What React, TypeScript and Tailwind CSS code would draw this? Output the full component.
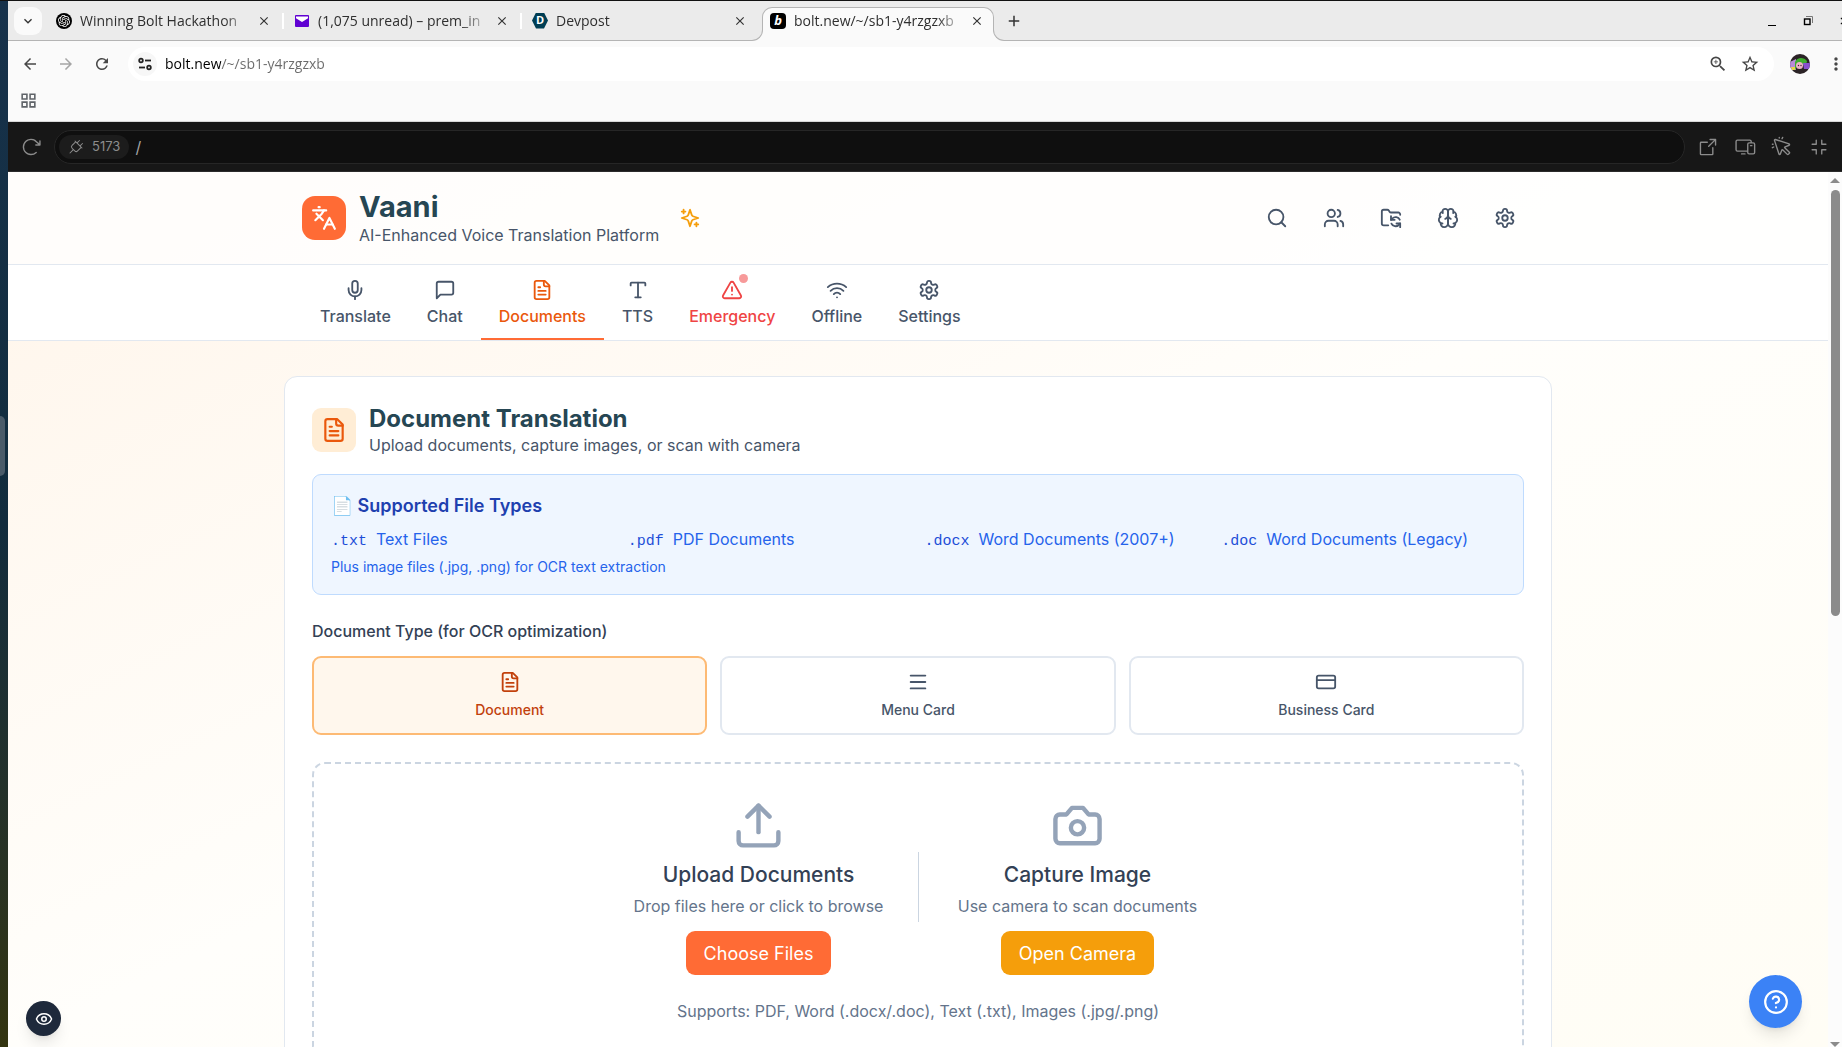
import { useState } from 'react'
import type { ComponentType, ReactNode } from 'react'
import { AlertTriangle, CreditCard, Eye, FolderSync, HelpCircle, Languages, Menu, Mic, Search, Type, Upload, Users, Wifi } from 'lucide-react'
import {
  MdAdd,
  MdArrowBack,
  MdArrowForward,
  MdClose,
  MdExpandMore,
  MdMoreVert,
  MdOutlineGridView,
  MdOutlineZoomIn,
  MdRefresh,
  MdStarBorder,
} from 'react-icons/md'
import { PiArrowClockwise, PiArrowSquareOut, PiCornersIn, PiCursorClick, PiDevices, PiPlug } from 'react-icons/pi'
import { SiOpenai } from 'react-icons/si'

type IconType = ComponentType<{ className?: string }>

function strokeIcon(children: ReactNode): IconType {
  return function StrokeIcon({ className }) {
    return (
      <svg
        viewBox="0 0 24 24"
        fill="none"
        stroke="currentColor"
        strokeWidth="2"
        strokeLinecap="round"
        strokeLinejoin="round"
        className={className}
      >
        {children}
      </svg>
    )
  }
}

const SparklesIcon = strokeIcon(
  <>
    <path d="m12 3-1.912 5.813a2 2 0 0 1-1.275 1.275L3 12l5.813 1.912a2 2 0 0 1 1.275 1.275L12 21l1.912-5.813a2 2 0 0 1 1.275-1.275L21 12l-5.813-1.912a2 2 0 0 1-1.275-1.275L12 3Z" />
    <path d="M5 3v4M19 17v4M3 5h4M17 19h4" />
  </>,
)

const GearIcon = strokeIcon(
  <>
    <path d="M12.22 2h-.44a2 2 0 0 0-2 2v.18a2 2 0 0 1-1 1.73l-.43.25a2 2 0 0 1-2 0l-.15-.08a2 2 0 0 0-2.73.73l-.22.38a2 2 0 0 0 .73 2.73l.15.1a2 2 0 0 1 1 1.72v.51a2 2 0 0 1-1 1.74l-.15.09a2 2 0 0 0-.73 2.73l.22.38a2 2 0 0 0 2.73.73l.15-.08a2 2 0 0 1 2 0l.43.25a2 2 0 0 1 1 1.73V20a2 2 0 0 0 2 2h.44a2 2 0 0 0 2-2v-.18a2 2 0 0 1 1-1.73l.43-.25a2 2 0 0 1 2 0l.15.08a2 2 0 0 0 2.73-.73l.22-.39a2 2 0 0 0-.73-2.73l-.15-.08a2 2 0 0 1-1-1.74v-.5a2 2 0 0 1 1-1.74l.15-.09a2 2 0 0 0 .73-2.73l-.22-.38a2 2 0 0 0-2.73-.73l-.15.08a2 2 0 0 1-2 0l-.43-.25a2 2 0 0 1-1-1.73V4a2 2 0 0 0-2-2z" />
    <circle cx="12" cy="12" r="3" />
  </>,
)

const BrainIcon = strokeIcon(
  <>
    <path d="M12 5a3 3 0 1 0-5.997.125 4 4 0 0 0-2.526 5.77 4 4 0 0 0 .556 6.588A4 4 0 1 0 12 18Z" />
    <path d="M12 5a3 3 0 1 1 5.997.125 4 4 0 0 1 2.526 5.77 4 4 0 0 1-.556 6.588A4 4 0 1 1 12 18Z" />
    <path d="M15 13a4.500 4.500 0 0 1-3-4 4.500 4.500 0 0 1-3 4M17.599 6.500a3 3 0 0 0 .399-1.375M6.003 5.125A3 3 0 0 0 6.401 6.500M3.477 10.896a4 4 0 0 1 .585-.396M19.938 10.500a4 4 0 0 1 .585.396M6 18a4 4 0 0 1-1.967-.516M19.967 17.484A4 4 0 0 1 18 18" />
  </>,
)

const DocumentIcon = strokeIcon(
  <>
    <path d="M15 2H6a2 2 0 0 0-2 2v16a2 2 0 0 0 2 2h12a2 2 0 0 0 2-2V7Z" />
    <path d="M14 2v4a2 2 0 0 0 2 2h4M10 9H8M16 13H8M16 17H8" />
  </>,
)

const ChatIcon = strokeIcon(<path d="M21 15a2 2 0 0 1-2 2H7l-4 4V5a2 2 0 0 1 2-2h14a2 2 0 0 1 2 2z" />)

const CameraIcon = strokeIcon(
  <>
    <path d="M14.500 4h-5L7 7H4a2 2 0 0 0-2 2v9a2 2 0 0 0 2 2h16a2 2 0 0 0 2-2V9a2 2 0 0 0-2-2h-3l-2.500-3z" />
    <circle cx="12" cy="13" r="3" />
  </>,
)

const navItems: { id: string; label: string; icon: IconType }[] = [
  { id: 'translate', label: 'Translate', icon: Mic },
  { id: 'chat', label: 'Chat', icon: ChatIcon },
  { id: 'documents', label: 'Documents', icon: DocumentIcon },
  { id: 'tts', label: 'TTS', icon: Type },
  { id: 'emergency', label: 'Emergency', icon: AlertTriangle },
  { id: 'offline', label: 'Offline', icon: Wifi },
  { id: 'settings', label: 'Settings', icon: GearIcon },
]

const headerActions: { label: string; icon: IconType }[] = [
  { label: 'Search', icon: Search },
  { label: 'Collaboration', icon: Users },
  { label: 'Sync files', icon: FolderSync },
  { label: 'AI insights', icon: BrainIcon },
  { label: 'Preferences', icon: GearIcon },
]

const fileTypes = [
  { ext: '.txt', name: 'Text Files' },
  { ext: '.pdf', name: 'PDF Documents' },
  { ext: '.docx', name: 'Word Documents (2007+)' },
  { ext: '.doc', name: 'Word Documents (Legacy)' },
]

const documentTypes: { id: string; label: string; icon: IconType }[] = [
  { id: 'document', label: 'Document', icon: DocumentIcon },
  { id: 'menu', label: 'Menu Card', icon: Menu },
  { id: 'business', label: 'Business Card', icon: CreditCard },
]

function MailIcon() {
  return (
    <svg viewBox="0 0 16 16" className="size-4">
      <rect x="1" y="2" width="14" height="12" rx="1" fill="#6001d2" />
      <path d="M2 3.5h12v1.7L8 9 2 5.2z" fill="#fff" />
    </svg>
  )
}

function DevpostIcon() {
  return (
    <span className="flex size-4 items-center justify-center bg-[#003e54] text-[11px] font-bold text-white [clip-path:polygon(25%_0,75%_0,100%_50%,75%_100%,25%_100%,0_50%)]">
      D
    </span>
  )
}

function BoltIcon() {
  return (
    <span className="flex size-4 items-center justify-center rounded-[4px] bg-black text-[13px] leading-none font-bold text-white italic">
      b
    </span>
  )
}

function BrowserTab({ icon, title, separator, active }: { icon: ReactNode; title: string; separator?: boolean; active?: boolean }) {
  return (
    <div
      className={
        active
          ? 'relative z-10 -mb-px flex w-[232px] items-center rounded-t-[10px] border border-b-0 border-[#b4b4b4] bg-[#fafafa] pr-2 pb-2 pl-[7px]'
          : 'relative flex w-[238px] items-center pr-[14px] pb-[6px] pl-2'
      }
    >
      {active && (
        <>
          {/* flared feet that join the tab to the toolbar */}
          <span className="absolute bottom-0 -left-[11px] size-[11px] bg-[#fafafa]">
            <span className="block size-full rounded-br-[11px] border-r border-b border-[#b4b4b4] bg-[#ebebeb]" />
          </span>
          <span className="absolute -right-[11px] bottom-0 size-[11px] bg-[#fafafa]">
            <span className="block size-full rounded-bl-[11px] border-b border-l border-[#b4b4b4] bg-[#ebebeb]" />
          </span>
        </>
      )}
      <button className="flex min-w-0 flex-1 items-center gap-2 text-left">
        <span className="shrink-0">{icon}</span>
        <span className="min-w-0 flex-1 overflow-hidden text-[14px] whitespace-nowrap text-[#2f2f2f] [mask-image:linear-gradient(to_right,black_calc(100%-28px),transparent)]">
          {title}
        </span>
      </button>
      <button aria-label="Close tab" className="ml-1 flex size-4 shrink-0 items-center justify-center text-[#333]">
        <MdClose className="size-[14px]" />
      </button>
      {separator && <span className="absolute top-[6px] right-[2px] h-4 w-[2px] bg-white" />}
    </div>
  )
}

function BrowserChrome() {
  return (
    <div className="shrink-0 font-['Open_Sans',sans-serif]">
      <div className="flex h-10 items-stretch border-b border-[#b4b4b4] bg-[#ebebeb] pt-[6px]">
        <button aria-label="Search tabs" className="mr-[6px] ml-[6px] flex size-7 items-center justify-center rounded-[9px] bg-[#fafafa] text-[#333]">
          <MdExpandMore className="size-4" />
        </button>
        <div className="flex items-stretch">
          <BrowserTab
            separator
            title="Winning Bolt Hackathon"
            icon={
              <span className="flex size-4 items-center justify-center rounded-full bg-black text-white">
                <SiOpenai className="size-3" />
              </span>
            }
          />
          <BrowserTab separator title="(1,075 unread) – prem_in" icon={<MailIcon />} />
          <BrowserTab title="Devpost" icon={<DevpostIcon />} />
          <BrowserTab active title="bolt.new/~/sb1-y4rzgzxb" icon={<BoltIcon />} />
        </div>
        <button aria-label="New tab" className="ml-[6px] flex size-7 items-center justify-center text-[#333]">
          <MdAdd className="size-[18px]" />
        </button>
        <div className="ml-auto flex h-7 items-center gap-[25px] overflow-hidden pl-4 text-black">
          <button aria-label="Minimize" className="flex size-[10px] items-end">
            <span className="block h-px w-2 bg-black" />
          </button>
          <button aria-label="Restore" className="size-[10px]">
            <svg viewBox="0 0 10 10" className="size-[10px]" fill="none">
              <path d="M3 .5h6.500V7" stroke="#777" />
              <rect x="1.500" y="3" width="5.500" height="5.500" stroke="#000" strokeWidth="1.400" />
            </svg>
          </button>
          <button aria-label="Close window" className="-mr-2 size-3">
            <MdClose className="size-3" />
          </button>
        </div>
      </div>

      <div className="flex h-[46px] items-center bg-[#fafafa] pl-3 text-[#474747]">
        <div className="flex items-center gap-4">
          <button aria-label="Back" className="flex size-5 items-center justify-center">
            <MdArrowBack className="size-[18px]" />
          </button>
          <button aria-label="Forward" className="flex size-5 items-center justify-center text-[#a5a5a5]">
            <MdArrowForward className="size-[18px]" />
          </button>
          <button aria-label="Reload" className="flex size-5 items-center justify-center">
            <MdRefresh className="size-[18px]" />
          </button>
        </div>
        <div className="ml-4 flex h-[34px] flex-1 items-center rounded-full bg-white pr-[14px] pl-[5px]">
          <button aria-label="Site information" className="flex size-6 items-center justify-center rounded-full bg-[#f7f7f7]">
            <svg viewBox="0 0 14 14" className="size-[14px]" fill="none" stroke="#222" strokeWidth="1.800">
              <circle cx="3" cy="3.500" r="1.800" />
              <path d="M7 3.500h6" />
              <circle cx="11" cy="10.500" r="1.800" />
              <path d="M1 10.500h6" />
            </svg>
          </button>
          <input
            aria-label="Address"
            defaultValue="bolt.new/~/sb1-y4rzgzxb"
            className="ml-2 min-w-0 flex-1 bg-[linear-gradient(to_right,#000_56px,#6b6b6b_56px)] bg-clip-text pb-[2px] text-[14px] text-transparent outline-none"
          />
          <button aria-label="Zoom">
            <MdOutlineZoomIn className="size-5" />
          </button>
          <button aria-label="Bookmark" className="ml-3">
            <MdStarBorder className="size-5" />
          </button>
        </div>
        <button aria-label="Profile" className="ml-4 size-5 overflow-hidden rounded-full">
          <svg viewBox="0 0 20 20" className="size-5">
            <rect width="20" height="20" fill="#2b2326" />
            <path d="M0 8 6 5v11H0z" fill="#b98ad9" />
            <path d="M5 8c2-5 9-5 12-1l-1 4-9 1-2 4z" fill="#3fae2f" />
            <path d="M13 9h7v6h-6z" fill="#8a4fd0" />
            <circle cx="9.500" cy="11.500" r="3.500" fill="#eeb0c8" />
            <path d="M1 13h4v3H2z" fill="#e8d44a" />
            <circle cx="8.500" cy="11.500" r=".7" fill="#402030" />
            <circle cx="11" cy="11.500" r=".7" fill="#402030" />
          </svg>
        </button>
        <button aria-label="Browser menu" className="-mr-1 ml-4">
          <MdMoreVert className="size-5" />
        </button>
      </div>

      <div className="flex h-[35px] items-start border-b border-[#d8d8d8] bg-[#fafafa] pt-1 pl-[11px] text-[#5f6368]">
        <button aria-label="Apps">
          <MdOutlineGridView className="size-[19px]" />
        </button>
      </div>
    </div>
  )
}

function PreviewBar() {
  return (
    <div className="flex h-[50px] shrink-0 items-center border-b border-[#2b2b2b] bg-[#171717] px-3 font-['Inter',sans-serif] text-[#8c8c8c]">
      <button aria-label="Reload preview">
        <PiArrowClockwise className="size-[22px]" />
      </button>
      <div className="ml-3 flex h-[34px] flex-1 items-center rounded-full border border-[#262626] bg-[#0f0f0f] pl-1">
        <button className="flex h-6 items-center gap-2 rounded-full bg-[#1c1c1c] px-[9px] text-[13px]">
          <PiPlug className="size-4" />
          5173
        </button>
        <input aria-label="Preview path" defaultValue="/" className="ml-[6px] min-w-0 flex-1 bg-transparent text-[16px] text-[#a3a3a3] outline-none" />
      </div>
      <div className="ml-3 flex items-center gap-[15px]">
        <button aria-label="Open in new tab">
          <PiArrowSquareOut className="size-[22px]" />
        </button>
        <button aria-label="Device preview">
          <PiDevices className="size-[22px]" />
        </button>
        <button aria-label="Select element">
          <PiCursorClick className="size-[22px]" />
        </button>
        <button aria-label="Exit full screen">
          <PiCornersIn className="size-[22px]" />
        </button>
      </div>
    </div>
  )
}

function AppHeader() {
  return (
    <header className="border-b border-[#e2e8f0] bg-white/80">
      <div className="mx-auto flex max-w-[1268px] items-center justify-between px-[18px] py-[18px]">
        <div className="flex items-center">
          <div className="flex size-11 items-center justify-center rounded-[13px] bg-[#ff6b35] text-white">
            <Languages className="size-[26px]" />
          </div>
          <div className="ml-[13px]">
            <h1 className="text-[29px] leading-[34px] font-bold text-[#264653]">Vaani</h1>
            <p className="text-[16px] leading-[22px] text-[#475569]">AI-Enhanced Voice Translation Platform</p>
          </div>
          <SparklesIcon className="ml-5 size-[22px] text-[#f59e0b]" />
        </div>
        <div className="flex items-center pr-px">
          {headerActions.map(({ label, icon: Icon }) => (
            <button key={label} aria-label={label} className="flex h-10 w-[57px] items-center justify-center text-[#475569]">
              <Icon className="size-[22px]" />
            </button>
          ))}
        </div>
      </div>
    </header>
  )
}

function AppNav({ current, onSelect }: { current: string; onSelect: (id: string) => void }) {
  return (
    <nav className="border-b border-[#e2e8f0] bg-white">
      <div className="mx-auto flex max-w-[1268px] px-[18px]">
        {navItems.map(({ id, label, icon: Icon }) => {
          const active = id === current
          const tone = active
            ? 'border-[#ff6b35] text-[#ea580c]'
            : id === 'emergency'
              ? 'border-transparent text-[#ef4444]'
              : 'border-transparent text-[#475569]'
          return (
            <button
              key={id}
              onClick={() => onSelect(id)}
              className={`flex flex-col items-center gap-1 border-b-2 px-[18px] pt-[14px] pb-[11px] text-[16px] leading-[22px] font-medium ${tone}`}
            >
              <span className="relative">
                <Icon className="size-[22px]" />
                {id === 'emergency' && <span className="absolute -top-[5px] -right-[5px] size-[9px] rounded-full bg-[#f79a9a]" />}
              </span>
              {label}
            </button>
          )
        })}
      </div>
    </nav>
  )
}

function UploadOption({ icon: Icon, title, hint, action, tone }: { icon: IconType; title: string; hint: string; action: string; tone: string }) {
  return (
    <div className="flex w-[250px] flex-col items-center">
      <Icon className="size-[53px] text-[#94a3b8]" />
      <h3 className="mt-2 text-[21px] leading-[30px] font-medium text-[#334155]">{title}</h3>
      <p className="mt-[5px] text-[16px] leading-[22px] text-[#64748b]">{hint}</p>
      <button className={`mt-[14px] h-11 rounded-[9px] px-[18px] text-[18px] text-white ${tone}`}>{action}</button>
    </div>
  )
}

function DocumentTranslation() {
  const [docType, setDocType] = useState('document')

  return (
    <section className="mx-auto max-w-[1268px] rounded-[13px] border border-[#e2e8f0] bg-white p-[27px] pt-[26px]">
      <div className="flex items-center">
        <div className="flex size-11 items-center justify-center rounded-[9px] bg-[#ffedd5] text-[#ea580c]">
          <DocumentIcon className="size-[26px]" />
        </div>
        <div className="ml-[13px]">
          <h2 className="text-[24px] leading-[31px] font-bold text-[#264653]">Document Translation</h2>
          <p className="text-[16px] leading-[22px] text-[#475569]">Upload documents, capture images, or scan with camera</p>
        </div>
      </div>

      <div className="mt-[18px] rounded-[9px] border border-[#bfdbfe] bg-[#eff6ff] px-[18px] pt-[17px] pb-[18px]">
        <h3 className="text-[18px] leading-[28px] font-semibold text-[#1e40af]">📄 Supported File Types</h3>
        <div className="mt-2 grid grid-cols-4 gap-[13px]">
          {fileTypes.map(({ ext, name }) => (
            <div key={ext} className="flex items-baseline gap-[9px] text-[16px] leading-[22px] text-[#2563eb]">
              <code className="font-['Liberation_Mono',monospace] text-[15px] leading-4 text-[#1d4ed8]">{ext}</code>
              <span className="whitespace-nowrap">{name}</span>
            </div>
          ))}
        </div>
        <p className="mt-2 text-[14px] leading-[18px] text-[#2563eb]">Plus image files (.jpg, .png) for OCR text extraction</p>
      </div>

      <h3 className="mt-[25px] text-[16px] leading-[22px] font-medium text-[#334155]">Document Type (for OCR optimization)</h3>
      <div className="mt-[14px] grid grid-cols-3 gap-[13px]">
        {documentTypes.map(({ id, label, icon: Icon }) => (
          <button
            key={id}
            aria-pressed={docType === id}
            onClick={() => setDocType(id)}
            className={`flex flex-col items-center gap-2 rounded-[9px] border-2 px-[13px] pt-[13px] pb-[14px] text-[14px] leading-[18px] font-medium ${
              docType === id ? 'border-[#fdba74] bg-[#fff7ed] text-[#c2410c]' : 'border-[#e2e8f0] text-[#475569]'
            }`}
          >
            <Icon className="size-[22px]" />
            {label}
          </button>
        ))}
      </div>

      <div className="mt-[27px] flex flex-col items-center rounded-[13px] border-2 border-dashed border-[#cbd5e1] p-[35px]">
        <div className="flex items-center gap-[34px]">
          <UploadOption icon={Upload} title="Upload Documents" hint="Drop files here or click to browse" action="Choose Files" tone="bg-[#ff6b35]" />
          <div className="h-[70px] w-px bg-[#cbd5e1]" />
          <UploadOption icon={CameraIcon} title="Capture Image" hint="Use camera to scan documents" action="Open Camera" tone="bg-[#f59e0b]" />
        </div>
        <p className="mt-[25px] text-[16px] leading-[22px] text-[#64748b]">Supports: PDF, Word (.docx/.doc), Text (.txt), Images (.jpg/.png)</p>
      </div>
    </section>
  )
}

function Scrollbar() {
  return (
    <div className="flex w-[14px] shrink-0 flex-col items-center bg-[#fcfcfc] pt-[6px]">
      <svg viewBox="0 0 10 5" className="h-[5px] w-[10px]">
        <path d="M0 5 5 0l5 5z" fill="#8b8b8b" />
      </svg>
      <div className="mt-[7px] h-[49%] w-[9px] rounded-full bg-[#8b8b8b]" />
      <svg viewBox="0 0 10 5" className="mt-auto h-[5px] w-[10px]">
        <path d="m0 0 5 5 5-5z" fill="#8b8b8b" />
      </svg>
    </div>
  )
}

export default function App() {
  const [page, setPage] = useState('documents')

  return (
    <div className="flex h-screen overflow-hidden border-t border-[#111]">
      {/* Desktop showing behind the window */}
      <div className="flex w-2 shrink-0 flex-col justify-start bg-linear-to-b from-[#17324b] via-[#122c3d] to-[#33340f]">
        <div className="mt-[415px] h-[60px] w-[5px] rounded-r-md bg-[#4a5b69]" />
      </div>

      <div className="flex min-w-0 flex-1 flex-col">
        <BrowserChrome />
        <PreviewBar />
        <div className="relative flex min-h-0 flex-1">
          <div className="min-w-0 flex-1 overflow-hidden bg-linear-to-br from-[#fff5ea] via-[#fffefb] to-[#fffdf5] font-['Inter',sans-serif]">
            <AppHeader />
            <AppNav current={page} onSelect={setPage} />
            <main className="px-[18px] py-[35px]">
              <DocumentTranslation />
            </main>
          </div>
          <Scrollbar />

          <button aria-label="Show preview options" className="absolute bottom-[11px] left-[18px] flex size-[35px] items-center justify-center rounded-full bg-[#1e293b] text-white shadow-lg">
            <Eye className="size-[18px]" />
          </button>
          <button aria-label="Help" className="absolute right-[40px] bottom-[19px] flex size-[53px] items-center justify-center rounded-full bg-[#3b82f6] text-white shadow-lg">
            <HelpCircle className="size-[26px]" />
          </button>
        </div>
      </div>
    </div>
  )
}
